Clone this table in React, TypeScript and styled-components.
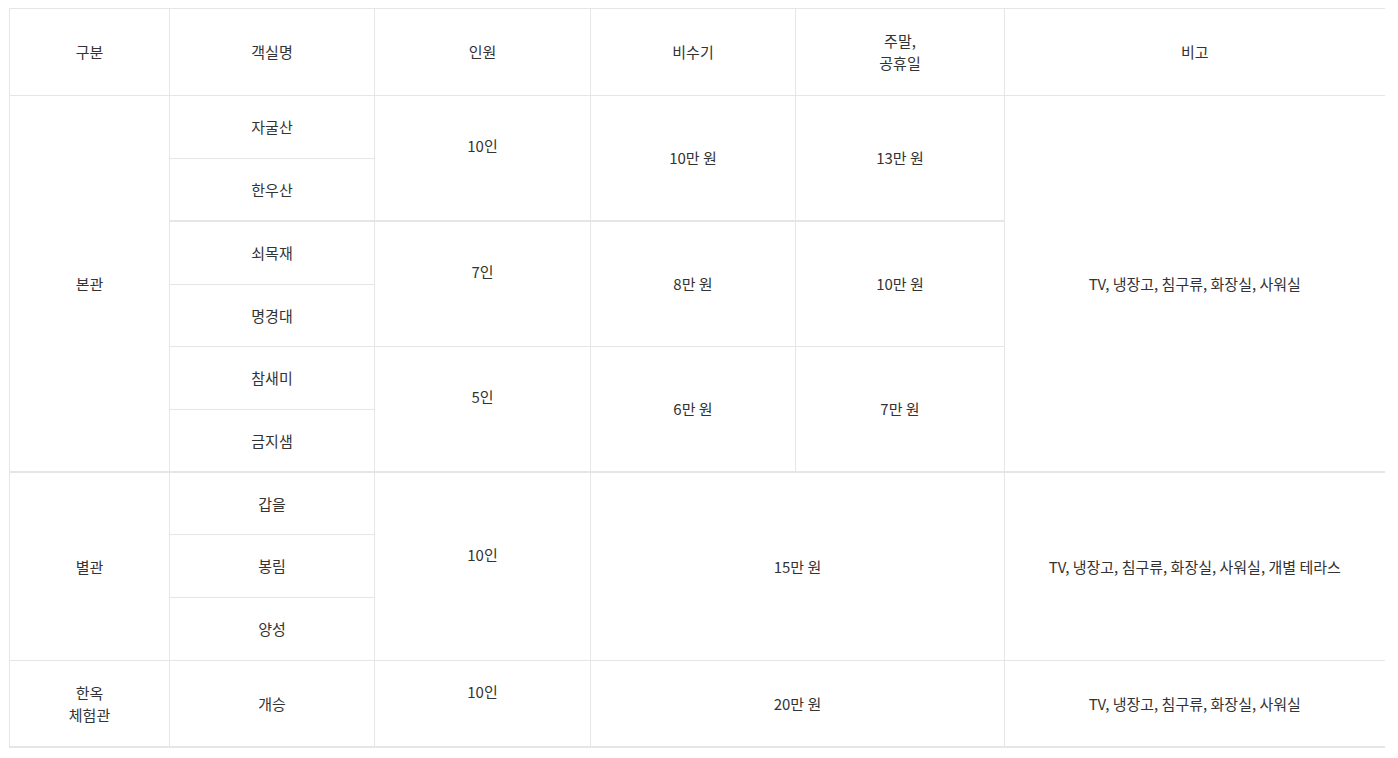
import React from "react";
import styled, { createGlobalStyle } from "styled-components";

const Global = createGlobalStyle`
  html, body { margin: 0; padding: 0; background: #fff; }
  body { font-family: "Noto Sans CJK KR", "Noto Sans", sans-serif; color: #333; }
`;

const Wrap = styled.div`
  padding: 8px 0 0 9px;
`;

const Table = styled.table`
  width: 1375px;
  border-collapse: collapse;
  table-layout: fixed;
  border-top: 1px solid #e6e6e6;
  border-left: 1px solid #e6e6e6;
  border-bottom: 2px solid #e6e6e6;
  font-size: 15px;
  letter-spacing: 0;
  line-height: 22px;
  color: #333;
`;

const Th = styled.th`
  font-weight: 400;
  height: 86px;
  padding: 0;
  text-align: center;
  vertical-align: middle;
  border-right: 1px solid #e6e6e6;
  border-bottom: 1px solid #e6e6e6;
  &:last-child { border-right: none; }
`;

const Row = styled.tr<{ $thick?: boolean }>`
  & > td {
    border-top: ${(p) => (p.$thick ? "2px" : "1px")} solid #e6e6e6;
  }
`;

const Td = styled.td<{ $h?: number; $lift?: boolean; $last?: boolean }>`
  padding: ${(p) => (p.$lift ? "0 0 24px" : "0")};
  height: ${(p) => (p.$h ? `${p.$h}px` : "auto")};
  text-align: center;
  vertical-align: middle;
  border-right: ${(p) => (p.$last ? "none" : "1px solid #e6e6e6")};
  border-bottom: 1px solid #e6e6e6;
`;

const cols = [160, 205, 216, 205, 209, 380];

export default function App() {
  return (
    <>
      <Global />
      <Wrap>
        <Table>
          <colgroup>
            {cols.map((w, i) => (
              <col key={i} style={{ width: w }} />
            ))}
          </colgroup>
          <thead>
            <tr>
              <Th>구분</Th>
              <Th>객실명</Th>
              <Th>인원</Th>
              <Th>비수기</Th>
              <Th>
                주말,
                <br />
                공휴일
              </Th>
              <Th>비고</Th>
            </tr>
          </thead>
          <tbody>
            <Row>
              <Td rowSpan={6}>본관</Td>
              <Td $h={62}>자굴산</Td>
              <Td rowSpan={2} $lift>10인</Td>
              <Td rowSpan={2}>10만 원</Td>
              <Td rowSpan={2}>13만 원</Td>
              <Td rowSpan={6} $last>TV, 냉장고, 침구류, 화장실, 사워실</Td>
            </Row>
            <Row>
              <Td $h={61}>한우산</Td>
            </Row>
            <Row $thick>
              <Td $h={62}>쇠목재</Td>
              <Td rowSpan={2} $lift>7인</Td>
              <Td rowSpan={2}>8만 원</Td>
              <Td rowSpan={2}>10만 원</Td>
            </Row>
            <Row>
              <Td $h={61}>명경대</Td>
            </Row>
            <Row>
              <Td $h={62}>참새미</Td>
              <Td rowSpan={2} $lift>5인</Td>
              <Td rowSpan={2}>6만 원</Td>
              <Td rowSpan={2}>7만 원</Td>
            </Row>
            <Row>
              <Td $h={61}>금지샘</Td>
            </Row>
            <Row $thick>
              <Td rowSpan={3}>별관</Td>
              <Td $h={61}>갑을</Td>
              <Td rowSpan={3} $lift>10인</Td>
              <Td rowSpan={3} colSpan={2}>15만 원</Td>
              <Td rowSpan={3} $last>TV, 냉장고, 침구류, 화장실, 사워실, 개별 테라스</Td>
            </Row>
            <Row>
              <Td $h={62}>봉림</Td>
            </Row>
            <Row>
              <Td $h={62}>양성</Td>
            </Row>
            <Row>
              <Td $h={85}>
                한옥
                <br />
                체험관
              </Td>
              <Td>개승</Td>
              <Td $lift>10인</Td>
              <Td colSpan={2}>20만 원</Td>
              <Td $last>TV, 냉장고, 침구류, 화장실, 사워실</Td>
            </Row>
          </tbody>
        </Table>
      </Wrap>
    </>
  );
}
